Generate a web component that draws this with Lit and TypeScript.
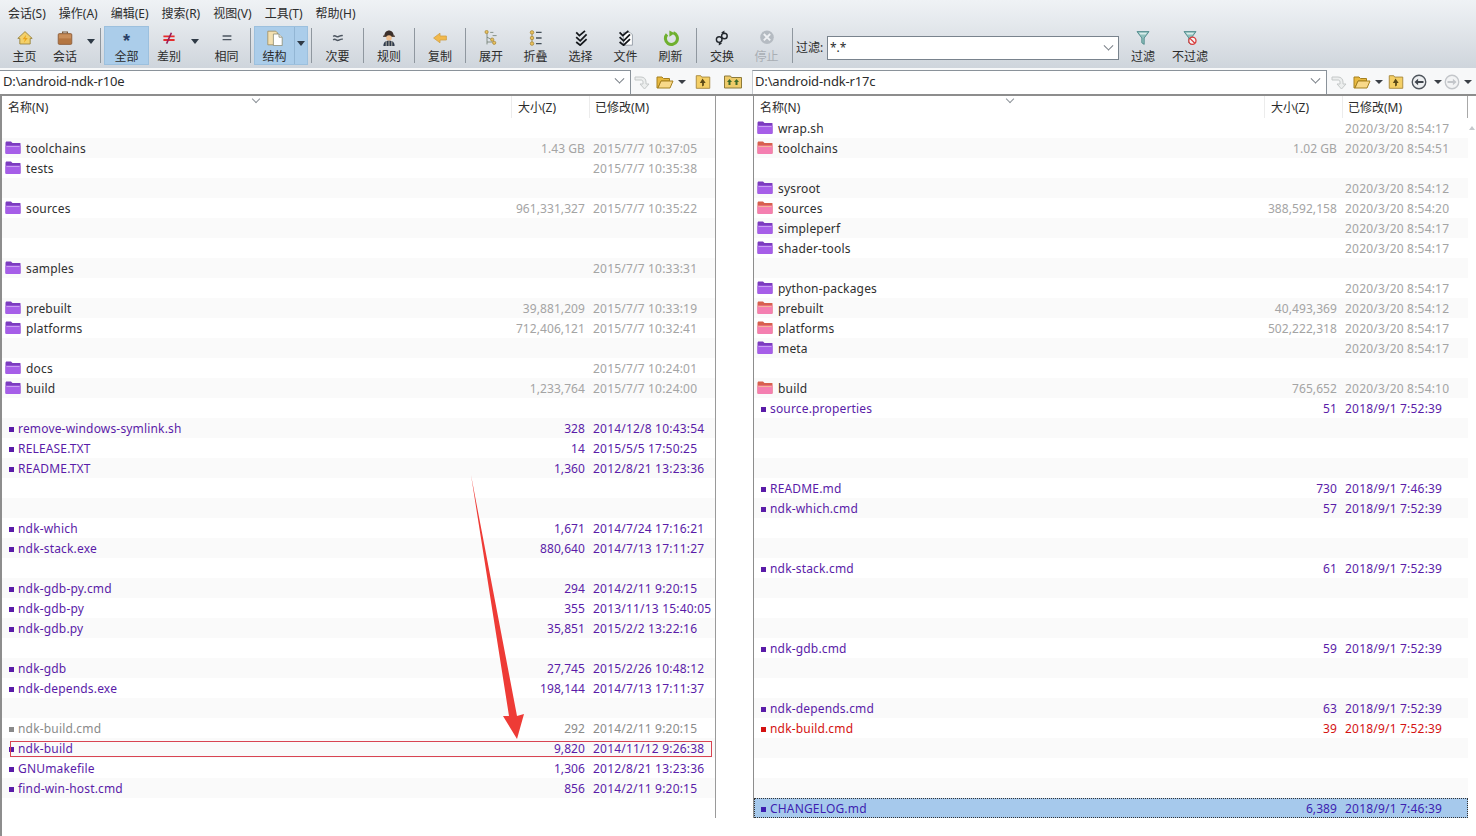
import { LitElement, html, css, svg, nothing } from "lit";
import { customElement } from "lit/decorators.js";

type Row = { i: number; n: string; s?: string; d: string; k: "f" | "p" | "u" | "g" | "r"; mark?: boolean; sel?: boolean };

const fd = (i: number, n: string, s: string, t: string, k: "f" | "p" = "f", day = "2015/7/7"): Row => ({ i, n, s, d: `${day} ${t}`, k });
const fl = (i: number, n: string, s: string, d: string, k: "u" | "g" | "r" = "u", extra: Partial<Row> = {}): Row => ({ i, n, s, d, k, ...extra });

const LEFT: Row[] = [
  fd(1, "toolchains", "1.43 GB", "10:37:05"),
  fd(2, "tests", "", "10:35:38"),
  fd(4, "sources", "961,331,327", "10:35:22"),
  fd(7, "samples", "", "10:33:31"),
  fd(9, "prebuilt", "39,881,209", "10:33:19"),
  fd(10, "platforms", "712,406,121", "10:32:41"),
  fd(12, "docs", "", "10:24:01"),
  fd(13, "build", "1,233,764", "10:24:00"),
  fl(15, "remove-windows-symlink.sh", "328", "2014/12/8 10:43:54"),
  fl(16, "RELEASE.TXT", "14", "2015/5/5 17:50:25"),
  fl(17, "README.TXT", "1,360", "2012/8/21 13:23:36"),
  fl(20, "ndk-which", "1,671", "2014/7/24 17:16:21"),
  fl(21, "ndk-stack.exe", "880,640", "2014/7/13 17:11:27"),
  fl(23, "ndk-gdb-py.cmd", "294", "2014/2/11 9:20:15"),
  fl(24, "ndk-gdb-py", "355", "2013/11/13 15:40:05"),
  fl(25, "ndk-gdb.py", "35,851", "2015/2/2 13:22:16"),
  fl(27, "ndk-gdb", "27,745", "2015/2/26 10:48:12"),
  fl(28, "ndk-depends.exe", "198,144", "2014/7/13 17:11:37"),
  fl(30, "ndk-build.cmd", "292", "2014/2/11 9:20:15", "g"),
  fl(31, "ndk-build", "9,820", "2014/11/12 9:26:38", "u", { mark: true }),
  fl(32, "GNUmakefile", "1,306", "2012/8/21 13:23:36"),
  fl(33, "find-win-host.cmd", "856", "2014/2/11 9:20:15"),
];

const R = "2020/3/20";
const RIGHT: Row[] = [
  fd(0, "wrap.sh", "", "8:54:17", "f", R),
  fd(1, "toolchains", "1.02 GB", "8:54:51", "p", R),
  fd(3, "sysroot", "", "8:54:12", "f", R),
  fd(4, "sources", "388,592,158", "8:54:20", "p", R),
  fd(5, "simpleperf", "", "8:54:17", "f", R),
  fd(6, "shader-tools", "", "8:54:17", "f", R),
  fd(8, "python-packages", "", "8:54:17", "f", R),
  fd(9, "prebuilt", "40,493,369", "8:54:12", "p", R),
  fd(10, "platforms", "502,222,318", "8:54:17", "p", R),
  fd(11, "meta", "", "8:54:17", "f", R),
  fd(13, "build", "765,652", "8:54:10", "p", R),
  fl(14, "source.properties", "51", "2018/9/1 7:52:39"),
  fl(18, "README.md", "730", "2018/9/1 7:46:39"),
  fl(19, "ndk-which.cmd", "57", "2018/9/1 7:52:39"),
  fl(22, "ndk-stack.cmd", "61", "2018/9/1 7:52:39"),
  fl(26, "ndk-gdb.cmd", "59", "2018/9/1 7:52:39"),
  fl(29, "ndk-depends.cmd", "63", "2018/9/1 7:52:39"),
  fl(30, "ndk-build.cmd", "39", "2018/9/1 7:52:39", "r"),
  fl(34, "CHANGELOG.md", "6,389", "2018/9/1 7:46:39", "u", { sel: true }),
];

const ic = (c: unknown, w = 20, h = 20) => html`<svg width=${w} height=${h} viewBox="0 0 20 20">${c}</svg>`;

const folderOpen = svg`<path d="M2 16V5h5l1.500 1.500h6V9H6L3 16z" fill="#e8b93f" stroke="#a5801f"/><path d="M3 16l3-7h12l-3 7z" fill="#f8d98a" stroke="#a5801f"/>`;
const folderUp = svg`<path d="M2.500 17V3h5l1 1.500h9V17z" fill="#f4cf66" stroke="#a5863a"/><path d="M9.500 6l3.500 5h-2v3l-2 1v-4H6.500z" fill="#5c4a18"/>`;
const folderUp2 = svg`<path d="M1.500 16V4h6l1 1.500h10V16z" fill="#eecb6a" stroke="#8d7a3a"/><path d="M6.500 7l2.500 3H7.500v3h-2v-3H4zM13.500 7l2.500 3h-1.500v3h-2v-3H11z" fill="#3f6a2a"/>`;
const grayArrow = svg`<path d="M3 5h6c3 0 5 2 5 5v2h3l-4.500 5L8 12h3v-2c0-1.500-1-2-2-2H3z" fill="#eceeee" stroke="#c4c8c8"/>`;
const circleBack = svg`<circle cx="10" cy="10" r="7.500" fill="#eef0f2" stroke="#50565e" stroke-width="1.500"/><path d="M5 10l4-3.500V9h6v2H9v2.500z" fill="#40464e"/>`;
const circleFwd = svg`<circle cx="10" cy="10" r="7.500" fill="#f2f3f4" stroke="#c3c6ca" stroke-width="1.500"/><path d="M15 10l-4-3.500V9H5v2h6v2.500z" fill="#c3c6ca"/>`;
const funnel = svg`<path d="M2.500 2h15L11.500 10v8l-3-2v-6z" fill="#8fc0bd" stroke="#3f7f80"/><path d="M5 3.500h10l-1.500 2h-7z" fill="#d8ecea"/>`;

const ICONS: Record<string, unknown> = {
  home: svg`<path d="M10 2L1 10.500H3.500v7h13v-7H19z" fill="#f3d06a" stroke="#8f7a35" stroke-linejoin="round"/><path d="M11.500 6L7 11.500h3L8.500 16l5-6H10.500z" fill="#eaa51a"/>`,
  case: svg`<path d="M7 4.500V2.500h6v2" fill="none" stroke="#7a5a3a" stroke-width="1.500"/><rect x="1.500" y="4.500" width="17" height="13.500" rx="1.500" fill="#b47642" stroke="#8a5c38"/><rect x="2.500" y="5.500" width="15" height="5" fill="#c98e5a"/>`,
  all: html`<span class="glyph all">*</span>`,
  diff: svg`<path d="M3 8h14M3 12.500h14" stroke="#e52c2c" stroke-width="2.400"/><path d="M13 3.500L7 17" stroke="#9a1a58" stroke-width="2"/>`,
  same: svg`<path d="M4.500 7.500h11M4.500 12h11" stroke="#4c5560" stroke-width="1.800"/>`,
  tree: svg`<path d="M1 1.500h10l2 2v15H1z" fill="#f3e0b0" stroke="#a08c5c"/><path d="M8 5h7l4 4v10.500H8z" fill="#fff" stroke="#8a8a72"/><path d="M15 5v4h4" fill="#eee" stroke="#8a8a72"/>`,
  minor: svg`<path d="M4 8c2.500-2.500 4 1 6 .5s3-2 6-1.500M4 12.500c2.500-2.500 4 1 6 .5s3-2 6-1.500" stroke="#4c5560" stroke-width="1.800" fill="none"/>`,
  rule: svg`<path d="M4 8c0-5 3-7.500 6-7.500S16 3 16 8z" fill="#3c2f2a"/><rect x="2.500" y="7" width="15" height="1.500" fill="#4a3a30"/><circle cx="10" cy="10" r="3.500" fill="#f0c090"/><path d="M3 20c0-5 3-6.500 7-6.500s7 1.500 7 6.500z" fill="#2f3a4c"/><path d="M6.500 14v6M10 14v6M13.500 14v6" stroke="#e8e0c8" stroke-width=".9"/>`,
  copy: svg`<path d="M2 10L10 4v3.500h8v5h-8V16z" fill="#f2b94c" stroke="#cfa045"/>`,
  expand: svg`<path d="M5 3v15M5 9l6 3M5 15h7M9 3h4M12 7h5" stroke="#6f7c70" fill="none"/><circle cx="4.500" cy="2.500" r="2" fill="#eac15c" stroke="#a8893a"/><circle cx="11.500" cy="12" r="2" fill="#eac15c" stroke="#a8893a"/><circle cx="14" cy="16" r="2" fill="#eac15c" stroke="#a8893a"/>`,
  fold: svg`<path d="M5 3v14" stroke="#8a7a40"/><circle cx="5" cy="3" r="2.200" fill="#eac15c" stroke="#a8893a"/><circle cx="5" cy="10" r="2.200" fill="#eac15c" stroke="#a8893a"/><circle cx="5" cy="17" r="2.200" fill="#eac15c" stroke="#a8893a"/><path d="M10 3h7M10 10h7M10 17h7" stroke="#45505a" stroke-width="1.600"/>`,
  select: svg`<path d="M4 3l4 4 7-6M4 9l5 4.500 8-8M4 15l5 4 8-7.500" fill="none" stroke="#15181c" stroke-width="2.200"/>`,
  file: svg`<path d="M7 3h8l3 3v13H7z" fill="#fff" stroke="#88919a"/><path d="M2 3l4 4 7-6M2 9l5 4.500 8-8M2 15l5 4 8-7.500" fill="none" stroke="#15181c" stroke-width="2.200"/>`,
  refresh: svg`<path d="M5 5.500a7.500 7.500 0 1 0 8-2" fill="none" stroke="#6fb02f" stroke-width="3.800"/><path d="M8 .5v8L14.500 4z" fill="#6fb02f"/>`,
  swap: svg`<circle cx="6.500" cy="12" r="3.500" fill="none" stroke="#23282e" stroke-width="1.800"/><circle cx="13" cy="7.500" r="3.500" fill="none" stroke="#23282e" stroke-width="1.800"/><path d="M9 3l4-2.500v5zM10 17l-4 2.500v-5z" fill="#23282e"/>`,
  stop: svg`<circle cx="10" cy="9" r="8.500" fill="#b5bbc2"/><path d="M6 5l8 8M14 5l-8 8" stroke="#eef0f3" stroke-width="2.400"/>`,
  filter: funnel,
  nofilter: svg`${funnel}<circle cx="13" cy="13.500" r="4.500" fill="#f4f4f4" stroke="#d83a3a" stroke-width="1.600"/><path d="M10 10.500l6 6" stroke="#d83a3a" stroke-width="1.600"/>`,
};

type Tool =
  | { sep: true }
  | { icon: string; label: string; w: number; ml?: number; on?: boolean; drop?: boolean; off?: boolean; split?: boolean };

const TOOLS: Tool[] = [
  { icon: "home", label: "主页", w: 41 },
  { icon: "case", label: "会话", w: 40 },
  { icon: "", label: "", w: 12, drop: true },
  { sep: true },
  { icon: "all", label: "全部", w: 45, on: true },
  { icon: "diff", label: "差别", w: 40 },
  { icon: "", label: "", w: 12, drop: true },
  { icon: "same", label: "相同", w: 41, ml: 5 },
  { sep: true },
  { icon: "tree", label: "结构", w: 54, on: true, split: true },
  { sep: true },
  { icon: "minor", label: "次要", w: 45 },
  { sep: true },
  { icon: "rule", label: "规则", w: 44 },
  { sep: true },
  { icon: "copy", label: "复制", w: 44 },
  { sep: true },
  { icon: "expand", label: "展开", w: 44 },
  { icon: "fold", label: "折叠", w: 45 },
  { icon: "select", label: "选择", w: 45 },
  { icon: "file", label: "文件", w: 45 },
  { icon: "refresh", label: "刷新", w: 45 },
  { sep: true },
  { icon: "swap", label: "交换", w: 44 },
  { icon: "stop", label: "停止", w: 45, off: true },
  { sep: true },
];

const MENUS = ["会话(S)", "操作(A)", "编辑(E)", "搜索(R)", "视图(V)", "工具(T)", "帮助(H)"];

@customElement("app-root")
export class AppRoot extends LitElement {
  static styles = css`
    :host {
      display: block;
      width: 1476px;
      height: 836px;
      overflow: hidden;
      position: relative;
      background: #fff;
      color: #2c2c2c;
      font: 12px/16px "Noto Sans", "Noto Sans CJK SC", sans-serif;
    }
    .chrome { height: 68px; background: linear-gradient(#eff2f5, #e6eaee 30%, #cfd5dc); }
    .menu { display: flex; height: 26px; align-items: center; padding-left: 8px; padding-top: 1px; box-sizing: border-box; gap: 13px; }
    .toolbar { display: flex; height: 42px; padding-left: 4px; align-items: stretch; }
    .tool { display: flex; flex-direction: column; align-items: center; position: relative; height: 39px; padding-top: 2px; box-sizing: border-box; flex: none; }
    .tool .lbl { margin-top: 1px; line-height: 15px; white-space: nowrap; }
    .tool.on { background: #abcdea; border: 1px solid #9cc0de; padding-top: 1px; }
    .tool.off { color: #a9aeb4; }
    .tool svg { display: block; transform: scale(0.8); }
    .glyph { display: block; width: 20px; height: 20px; text-align: center; box-sizing: border-box; }
    .all { font: 700 18px/17px "Liberation Sans", sans-serif; padding-top: 5px; color: #2a3f66; }
    .split { position: absolute; right: 12px; top: 0; bottom: 0; width: 1px; background: #93b6d4; }
    .tool .splitarrow { position: absolute; right: 2px; top: 14px; }
    .drop { padding-top: 13px; }
    .arrow { width: 0; height: 0; border: 4px solid transparent; border-top: 5px solid #2f3a46; border-bottom: 0; display: block; }
    .sep { width: 1px; height: 35px; margin: 2px 3px 0; background: #8f979f; flex: none; }
    .withsplit { margin-right: 13px; }
    .filter { display: flex; align-items: flex-start; }
    .flabel { padding-top: 14px; width: 31px; flex: none; white-space: nowrap; }
    .fbox { width: 292px; height: 24px; margin-top: 10px; box-sizing: border-box; background: #fff; border: 1px solid #79838d; display: flex; align-items: center; justify-content: space-between; padding: 0 3px 0 2px; flex: none; }
    .chev { width: 6px; height: 6px; border: solid #757c84; border-width: 0 1px 1px 0; transform: rotate(45deg) translate(-2px, -2px); margin-right: 3px; }

    .paths { display: grid; grid-template-columns: 752px 724px; height: 28px; background: #f7f8f9; border-bottom: 2px solid #8d8d8d; box-sizing: border-box; padding-top: 2px; }
    .pathside { display: flex; align-items: flex-start; height: 24px; }
    .pinput { height: 24px; box-sizing: border-box; background: #fff; border: 1px solid #8a929a; border-bottom: 0; border-left: 0; display: flex; align-items: center; justify-content: space-between; font-size: 13px; letter-spacing: -0.15px; padding: 0 4px 3px 3px; flex: none; }
    .pl { width: 631px; }
    .pr { width: 575px; border-left: 1px solid #c8ccd0; padding-left: 2px; }
    .picons { display: flex; align-items: center; height: 24px; color: #333; padding-left: 1px; }
    .pr + .picons { padding-left: 2px; }
    .picons svg { display: block; flex: none; }
    .mini { width: 0; height: 0; border: 4px solid transparent; border-top: 4px solid #3a3f46; border-bottom: 0; flex: none; margin: 0 4px 0 3px; }
    .mini.wide { margin-left: 6px; margin-right: 1px; }
    .gap3 { width: 3px; } .gap4 { width: 4px; } .gap5 { width: 5px; } .gap11 { width: 11px; }

    .panes { display: grid; grid-template-columns: 716px 37px 723px; height: 740px; }
    .pane { height: 722px; box-sizing: border-box; position: relative; }
    .pane.l { border-left: 2px solid #8d8d8d; border-right: 1px solid #9a9a9a; height: 740px; grid-column: 1; }
    .pane.r { border-left: 1px solid #8d8d8d; height: 722px; grid-column: 3; }
    .pane.l { height: 722px; border-left: 0; box-shadow: inset 2px 0 0 #8d8d8d; padding-left: 2px; }
    .rail { position: absolute; left: 0; top: 96px; width: 2px; height: 740px; background: #8d8d8d; }
    .head { display: flex; height: 22px; align-items: center; position: relative; }
    .hname { flex: 1; padding-left: 6px; padding-top: 1px; }
    .hcell { border-left: 1px solid #ececec; height: 22px; line-height: 23px; box-sizing: border-box; padding-left: 6px; }
    .hm { padding-left: 5px; }
    .sort { position: absolute; top: 0; width: 5px; height: 5px; border: solid #8f959b; border-width: 0 1px 1px 0; transform: rotate(45deg); }
    .row { height: 20px; display: flex; align-items: center; position: relative; white-space: nowrap; padding-top: 1px; box-sizing: border-box; }
    .row.odd { background: #fafafa; }
    .nm { flex: 1; display: flex; align-items: center; min-width: 0; letter-spacing: 0.17px; }
    .sz { text-align: right; letter-spacing: 0.08px; }
    .dt { letter-spacing: 0.2px; }
    .bullet { width: 5px; height: 5px; background: currentColor; margin: 1px 4px 0 7px; flex: none; }
    .folder { margin: -1px 5px 0 3px; flex: none; display: block; }
    .k-f, .k-p { color: #a4a4a4; }
    .k-f .nm, .k-p .nm { color: #2f2f2f; }
    .k-u { color: #5a1ca8; }
    .k-g { color: #8a8a8a; }
    .k-r { color: #d41212; }
    .row.sel { background: #a6c9ec; outline: 1px dotted #333; outline-offset: -1px; color: #3d1fb0; }
    .outline { position: absolute; left: 8px; right: 3px; top: 3px; bottom: 1px; border: 1px solid #d84452; pointer-events: none; }
    .l .row { padding-right: 1px; }
    .l .sz { width: 120px; } .l .dt { width: 121px; margin-left: 8px; }
    .l .hs { width: 78px; } .l .hm { width: 126px; }
    .r .sz { width: 120px; } .r .dt { width: 123px; margin-left: 8px; }
    .r .row { width: 714px; }
    .r .hs { width: 78px; } .r .hm { width: 126px; }
    .r .head { width: 714px; }
    .hend { position: absolute; right: 0; top: 0; bottom: 0; width: 1px; background: #a8a8a8; }
    .scrolltip { position: absolute; right: 1px; top: 30px; width: 0; height: 0; border: 3px solid transparent; border-bottom: 4px solid #c5c8cc; border-top: 0; }
    .annot { position: absolute; left: 460px; top: 465px; pointer-events: none; }
  `;

  private tool(t: Tool) {
    if ("sep" in t) return html`<div class="sep"></div>`;
    if (t.drop) return html`<div class="tool drop" style="width:${t.w}px"><span class="arrow"></span></div>`;
    const icon = ICONS[t.icon];
    const isGlyph = t.icon === "all";
    const cls = t.split ? "withsplit" : "";
    return html`<div class="tool ${t.on ? "on" : ""} ${t.off ? "off" : ""}" style="width:${t.w}px;margin-left:${t.ml ?? 0}px">
      <div class=${cls}>${isGlyph ? icon : ic(icon)}</div>
      <span class="lbl ${cls}">${t.label}</span>
      ${t.split ? html`<span class="split"></span><span class="splitarrow arrow"></span>` : nothing}
    </div>`;
  }

  private folderIcon(pink: boolean) {
    return html`<svg class="folder" width="16" height="14" viewBox="0 0 16 14">
      <path d="M0.500 12.500V2c0-.8.5-1.500 1.200-1.500H6l1.500 1.500H15c.5 0 .5.500.5 1V12.500z" fill=${pink ? "#d8604e" : "#7c3cc0"}/>
      <path d="M0.500 12.500V6c0-1 .5-1.500 1-1.500H15c.5 0 .5.500.5 1V12c0 .5-.5 1-1 1H1.500c-.5 0-1-.5-1-1z" fill=${pink ? "#f47fb0" : "#a65ee8"}/>
      <path d="M1.500 5.500h13" stroke=${pink ? "#f7b69a" : "#c9a0f2"}/>
    </svg>`;
  }

  private rows(data: Row[]) {
    const byIdx = new Map(data.map((r) => [r.i, r]));
    return Array.from({ length: 35 }, (_, i) => {
      const r = byIdx.get(i);
      const odd = i % 2 === 1 ? "odd" : "";
      if (!r) return html`<div class="row ${odd}"></div>`;
      const isDir = r.k === "f" || r.k === "p";
      return html`<div class="row ${odd} k-${r.k} ${r.sel ? "sel" : ""}">
        <span class="nm">
          ${isDir ? this.folderIcon(r.k === "p") : html`<span class="bullet"></span>`}
          ${r.n}
        </span>
        <span class="sz">${r.s}</span>
        <span class="dt">${r.d}</span>
        ${r.mark ? html`<span class="outline"></span>` : nothing}
      </div>`;
    });
  }

  render() {
    return html`
      <div class="chrome">
        <div class="menu">${MENUS.map((m) => html`<span>${m}</span>`)}</div>
        <div class="toolbar">
          ${TOOLS.map((t) => this.tool(t))}
          <div class="filter">
            <span class="flabel">过滤:</span>
            <div class="fbox"><span>*.*</span><span class="chev"></span></div>
            <div class="tool" style="width:48px">${ic(ICONS.filter)}<span class="lbl">过滤</span></div>
            <div class="tool" style="width:46px">${ic(ICONS.nofilter)}<span class="lbl">不过滤</span></div>
          </div>
        </div>
      </div>
      <div class="paths">
        <div class="pathside">
          <div class="pinput pl"><span>D:\\android-ndk-r10e</span><span class="chev"></span></div>
          <div class="picons">
            ${ic(grayArrow)}<span class="gap3"></span>${ic(folderOpen)}<span class="mini"></span><span class="gap4"></span>${ic(folderUp, 18, 18)}<span class="gap11"></span>${ic(folderUp2)}
          </div>
        </div>
        <div class="pathside">
          <div class="pinput pr"><span>D:\\android-ndk-r17c</span><span class="chev"></span></div>
          <div class="picons">
            ${ic(grayArrow)}<span class="gap3"></span>${ic(folderOpen)}<span class="mini"></span>${ic(folderUp, 18, 18)}<span class="gap5"></span>${ic(circleBack, 18, 18)}<span class="mini wide"></span>${ic(circleFwd, 18, 18)}<span class="mini"></span>
          </div>
        </div>
      </div>
      <div class="panes">
        <div class="pane l">
          <div class="head">
            <span class="hname">名称(N)</span>
            <span class="sort" style="left:251px"></span>
            <span class="hcell hs">大小(Z)</span>
            <span class="hcell hm">已修改(M)</span>
          </div>
          ${this.rows(LEFT)}
        </div>
        <div class="pane r">
          <div class="head">
            <span class="hname">名称(N)</span>
            <span class="sort" style="left:253px"></span>
            <span class="hcell hs">大小(Z)</span>
            <span class="hcell hm">已修改(M)</span>
            <span class="hend"></span>
          </div>
          ${this.rows(RIGHT)}
          <span class="scrolltip"></span>
        </div>
      </div>
      <div class="rail"></div>
      <svg class="annot" width="80" height="290" viewBox="460 465 80 290">
        <path d="M471 475L509 716L503 716L517 739L524 714L517 716Z" fill="#ee3b36"/>
      </svg>
    `;
  }
}
